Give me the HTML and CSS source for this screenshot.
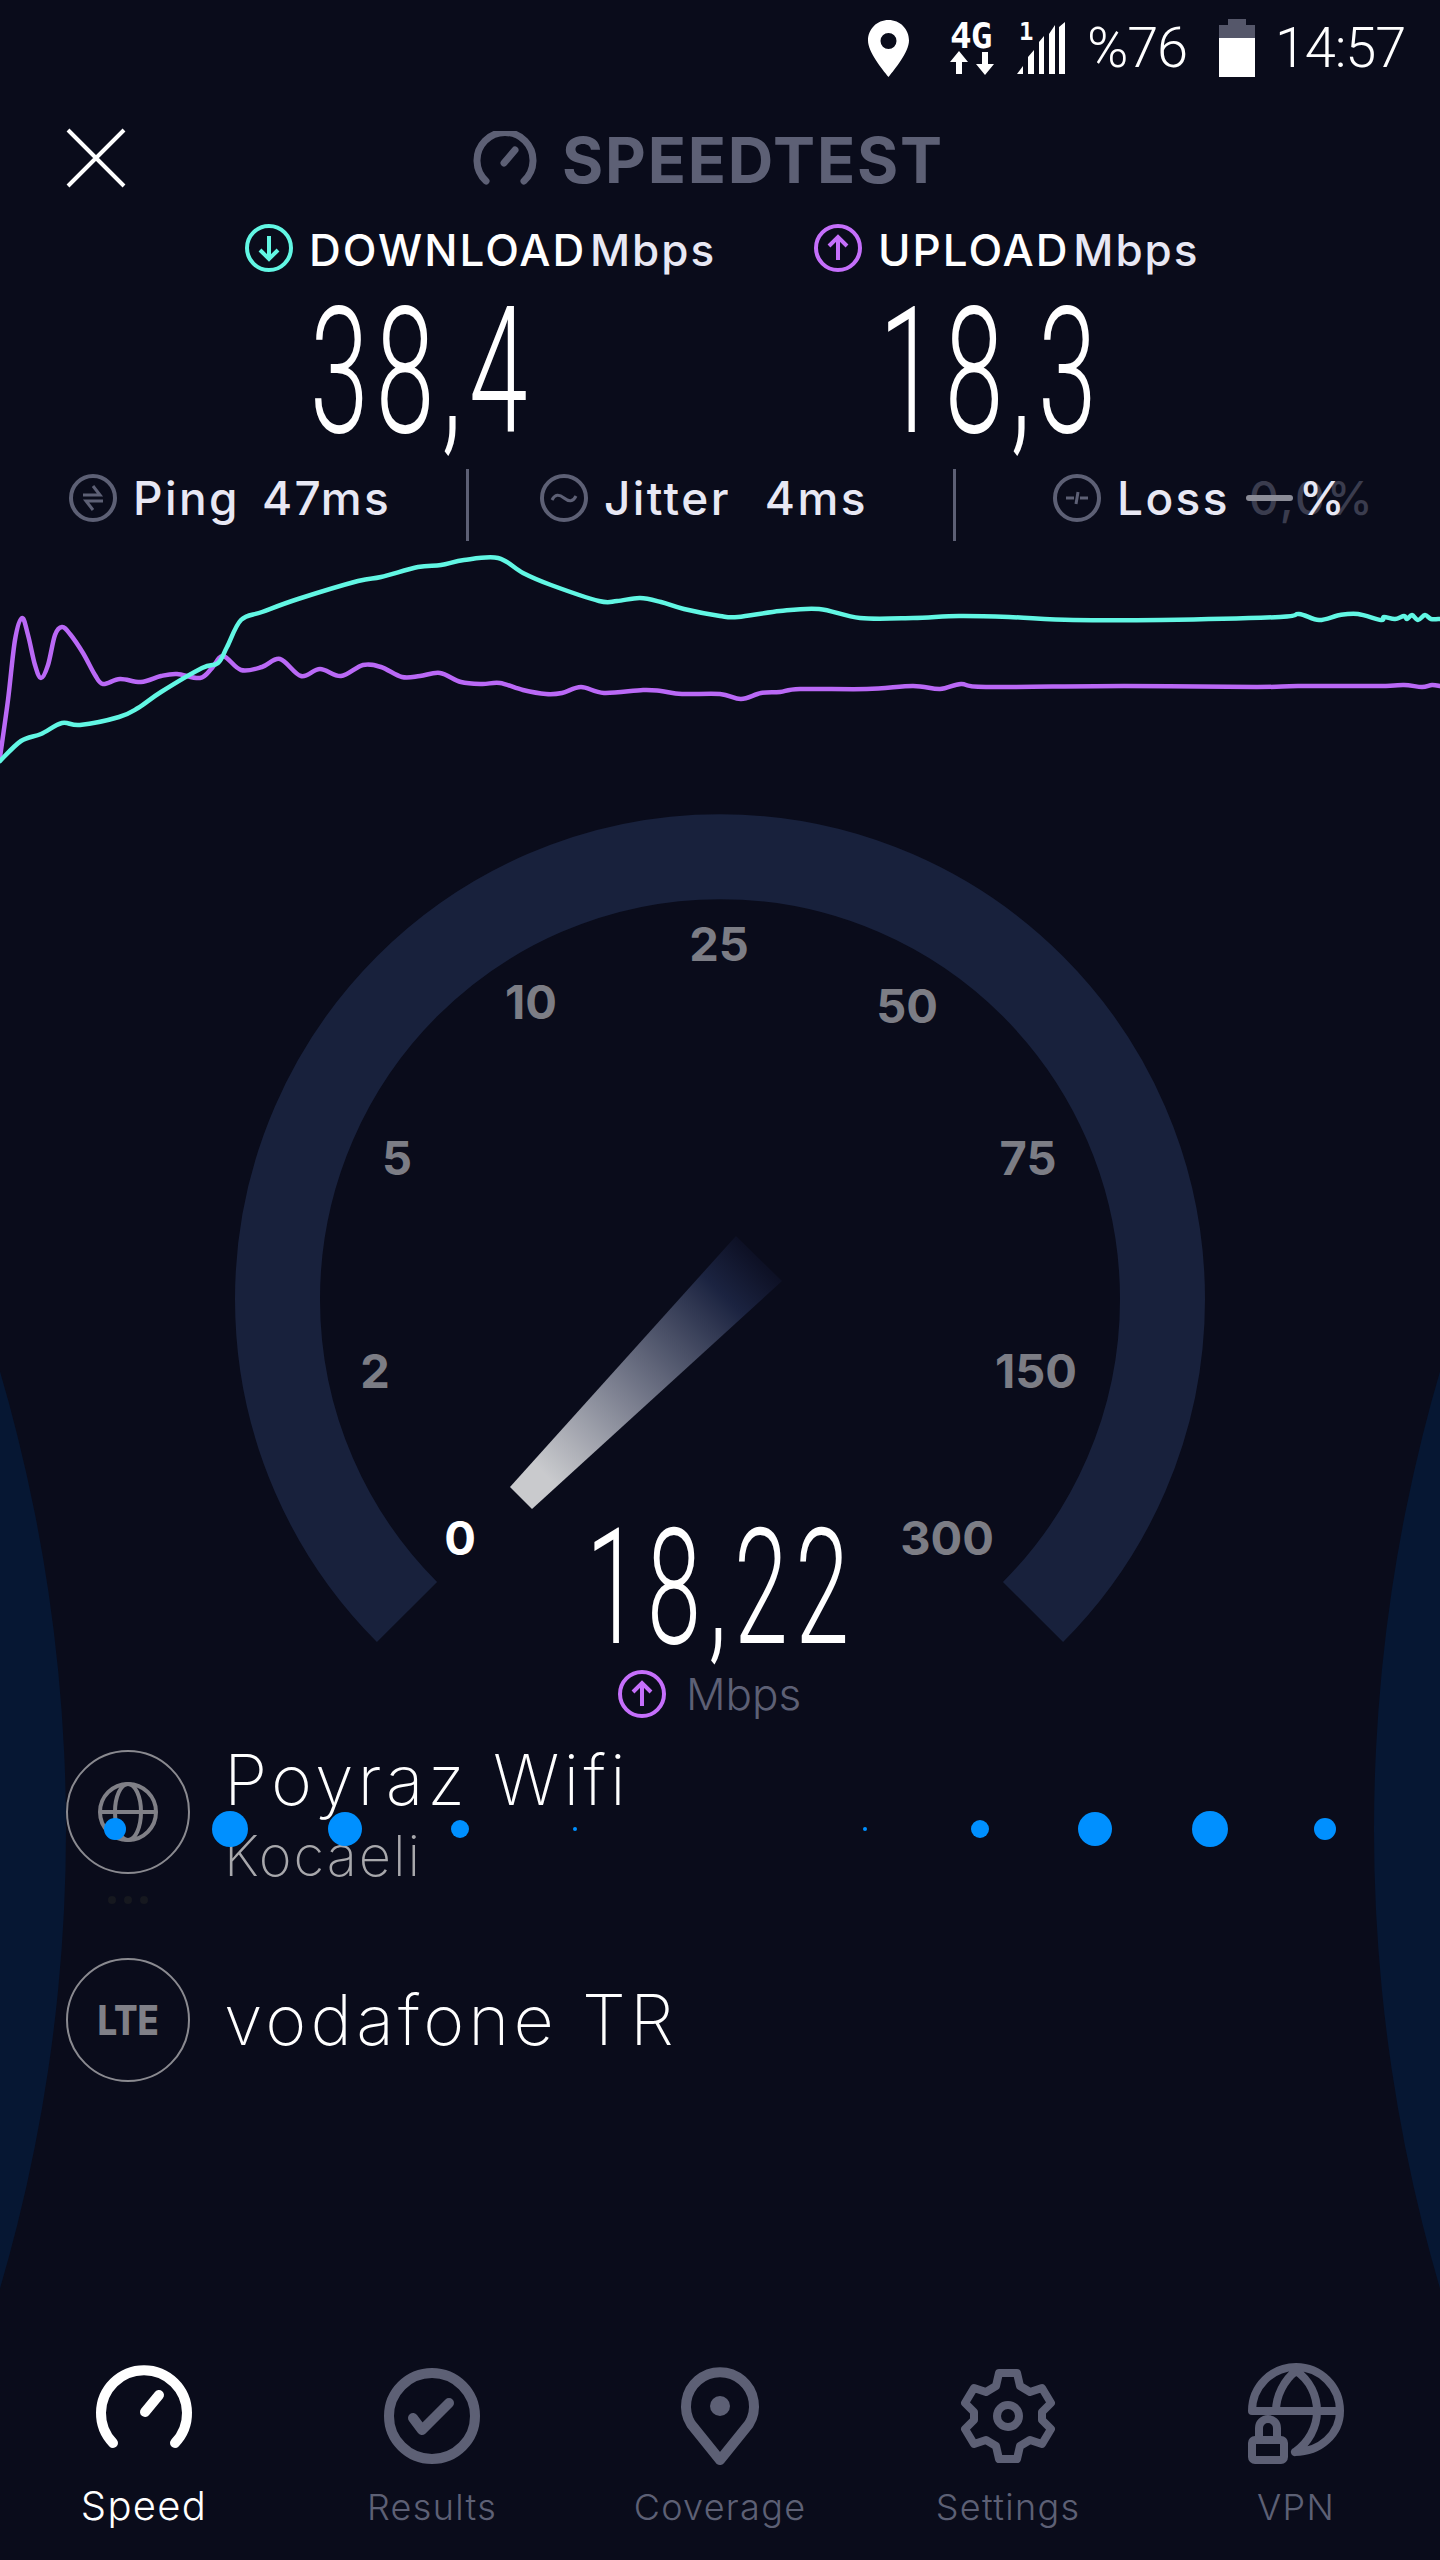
FILE: index.html
```html
<!DOCTYPE html>
<html>
<head>
  <title>Speedtest</title>
  <link rel="stylesheet" href="styles.css">
</head>
<body>
  <div class="backdrop">
    <div class="side side-left"></div>
    <div class="side side-right"></div>
  </div>

  <div class="status">
    <svg class="pin" viewBox="0 0 41 57"><path fill-rule="evenodd" d="M20.5 0C9 0 0 9 0 20.5 0 32 14 49 20.5 57 27 49 41 32 41 20.5 41 9 32 0 20.5 0zm0 13a8 8 0 1 1 0 16 8 8 0 0 1 0-16z"/></svg>
    <div class="net">
      <span class="net-label">4G</span>
      <svg class="net-arrows" viewBox="0 0 44 24"><path d="M9 0l9 11h-6v12H6V11H0zM35 24l-9-11h6V1h6v12h6z"/></svg>
    </div>
    <div class="signal">
      <span class="sim">1</span>
      <svg viewBox="0 0 48 52"><path d="M0 52l6-8v8zM11 52V35l6-7v24zM22 52V20l5-6v38zM32 52V12l6-9v49zM42 52V5l6-5v52z"/></svg>
    </div>
    <span class="percent">%76</span>
    <svg class="battery" viewBox="0 0 36 58"><path class="battery-empty" d="M9 0h18v6h9v13H0V6h9z"/><path d="M0 19h36v39H0z"/></svg>
    <span class="clock">14:57</span>
  </div>

  <div class="header">
    <svg class="close" viewBox="0 0 60 60"><path d="M2 2l56 56M58 2L2 58"/></svg>
    <svg class="logo" viewBox="0 0 64 54"><path d="M13 50A28 28 0 1 1 51 50M31 32l11-13"/></svg>
    <span class="brand">SPEEDTEST</span>
  </div>

  <div class="speeds">
    <div class="speed">
      <div class="speed-label">
        <svg class="round-icon cyan" viewBox="0 0 48 48"><circle cx="24" cy="24" r="22"/><path d="M24 12v23M15 26l9 9 9-9"/></svg>
        <span><b>DOWNLOAD</b> Mbps</span>
      </div>
      <div class="big-number">38,4</div>
    </div>
    <div class="speed">
      <div class="speed-label">
        <svg class="round-icon purple" viewBox="0 0 48 48"><circle cx="24" cy="24" r="22"/><path d="M24 36V13M15 22l9-9 9 9"/></svg>
        <span><b>UPLOAD</b> Mbps</span>
      </div>
      <div class="big-number">18,3</div>
    </div>
  </div>

  <div class="stats">
    <div class="stat stat-ping">
      <svg class="round-icon grey" viewBox="0 0 48 48"><circle cx="24" cy="24" r="22"/><path class="thin" d="M14 21h17l-7-9M34 27H17l7 9"/></svg>
      <span class="stat-name">Ping</span>
      <span class="stat-value">47ms</span>
    </div>
    <div class="stat stat-jitter">
      <svg class="round-icon grey" viewBox="0 0 48 48"><circle cx="24" cy="24" r="22"/><path class="thin" d="M12 26c3-6 7-6 12-2s9 4 12-2"/></svg>
      <span class="stat-name">Jitter</span>
      <span class="stat-value">4ms</span>
    </div>
    <div class="stat stat-loss">
      <svg class="round-icon grey" viewBox="0 0 48 48"><circle cx="24" cy="24" r="22"/><path class="thin" d="M13 24h8M27 24h8M25 18l-2 12"/></svg>
      <span class="stat-name">Loss</span>
      <span class="loss-value">0,0%<i class="loss-dash"></i><span class="loss-percent">%</span></span>
    </div>
  </div>

  <svg class="chart" viewBox="0 541 1440 259">
    <path id="line-upload" class="line line-upload"/>
    <path id="line-download" class="line line-download"/>
  </svg>

  <div class="gauge">
    <svg class="gauge-dial" viewBox="0 800 1440 860">
      <defs>
        <linearGradient id="needle" gradientUnits="userSpaceOnUse" x1="759" y1="1258" x2="521" y2="1498">
          <stop offset="0" stop-color="#0d1024"/>
          <stop offset="0.15" stop-color="#1b2340"/>
          <stop offset="0.55" stop-color="#777b8c"/>
          <stop offset="0.9" stop-color="#c9cacd"/>
        </linearGradient>
      </defs>
      <path class="dial-arc" d="M407 1612A442.5 442.5 0 1 1 1033 1612"/>
      <polygon fill="url(#needle)" points="736,1236 782,1281 532,1509 510,1487"/>
      <text class="tick" x="719" y="961">25</text>
      <text class="tick" x="531" y="1019">10</text>
      <text class="tick" x="907" y="1023">50</text>
      <text class="tick" x="397" y="1175">5</text>
      <text class="tick" x="1028" y="1175">75</text>
      <text class="tick" x="375" y="1388">2</text>
      <text class="tick" x="1036" y="1388">150</text>
      <text class="tick tick-on" x="460" y="1555">0</text>
      <text class="tick" x="947" y="1555">300</text>
    </svg>
    <div class="readout">
      <div class="readout-number">18,22</div>
      <div class="readout-unit">
        <svg class="round-icon purple" viewBox="0 0 48 48"><circle cx="24" cy="24" r="22"/><path d="M24 36V13M15 22l9-9 9 9"/></svg>
        <span>Mbps</span>
      </div>
    </div>
  </div>

  <div class="servers">
    <div class="server">
      <div class="server-badge">
        <svg class="globe" viewBox="0 0 60 60"><circle cx="30" cy="30" r="28"/><ellipse cx="30" cy="30" rx="13" ry="28"/><path d="M2 30h56"/></svg>
      </div>
      <div class="server-text">
        <div class="server-name">Poyraz Wifi</div>
        <div class="server-place">Kocaeli</div>
      </div>
      <div class="more"><i></i><i></i><i></i></div>
    </div>
    <div class="server">
      <div class="server-badge"><span class="lte">LTE</span></div>
      <div class="server-text">
        <div class="server-name">vodafone TR</div>
      </div>
    </div>

    <div class="dots">
      <div class="dot-group">
        <span class="dot"><i class="d22"></i></span>
        <span class="dot"><i class="d36"></i></span>
        <span class="dot"><i class="d34"></i></span>
        <span class="dot"><i class="d18"></i></span>
        <span class="dot"><i class="d4"></i></span>
      </div>
      <div class="dot-group">
        <span class="dot"><i class="d4"></i></span>
        <span class="dot"><i class="d18"></i></span>
        <span class="dot"><i class="d34"></i></span>
        <span class="dot"><i class="d36"></i></span>
        <span class="dot"><i class="d22"></i></span>
      </div>
    </div>
  </div>

  <div class="nav">
    <div class="nav-item active">
      <svg viewBox="0 4 96 96"><path d="M17 79A43 43 0 1 1 79 79"/><path d="M49 48l14-17"/></svg>
      <span>Speed</span>
    </div>
    <div class="nav-item">
      <svg viewBox="0 0 96 96"><circle cx="48" cy="48" r="43"/><path d="M29 50l9 12 27-27"/></svg>
      <span>Results</span>
    </div>
    <div class="nav-item">
      <svg viewBox="0 0 96 96"><path d="M48 92L19 56A34 34 0 1 1 77 56z"/><circle class="solid" cx="48" cy="38" r="10"/></svg>
      <span>Coverage</span>
    </div>
    <div class="nav-item">
      <svg class="gear" viewBox="0 0 96 96"><path d="M39 5h18l3 13 10 6 12-4 9 15-9 9v8l9 9-9 15-12-4-10 6-3 13H39l-3-13-10-6-12 4-9-15 9-9v-8l-9-9 9-15 12 4 10-6z"/><circle cx="48" cy="48" r="11"/></svg>
      <span>Settings</span>
    </div>
    <div class="nav-item">
      <svg class="gear" viewBox="0 0 96 96"><path d="M4 43A44 44 0 0 1 92 43C92 66 72 84 47 84M4 43h88M48 3C36 12 28 28 28 43M48 3C62 12 69 28 69 43C69 60 60 75 47 84"/><rect x="4" y="72" width="32" height="20" rx="3"/><path d="M11 72V60A9 9 0 0 1 29 60V72"/></svg>
      <span>VPN</span>
    </div>
  </div>

  <script src="chart.js"></script>
</body>
</html>
```

FILE: styles.css
```css
* {
  box-sizing: border-box;
}

body {
  position: relative;
  width: 1440px;
  height: 2560px;
  margin: 0;
  background-color: #0a0c1b;
  color: #fff;
  font-family: Inter, "Liberation Sans", sans-serif;
  display: flex;
  flex-direction: column;
}

.backdrop {
  position: absolute;
  top: 0;
  left: 0;
  width: 1440px;
  height: 2560px;
  overflow: hidden;
}

.side {
  position: absolute;
  top: 205px;
  width: 3250px;
  height: 3250px;
  border-radius: 50%;
  background-color: #061733;
}

.side-left {
  left: -3184px;
}

.side-right {
  right: -3184px;
}

/* status bar */

.status {
  position: relative;
  height: 96px;
  padding-right: 35px;
  display: flex;
  justify-content: flex-end;
  align-items: center;
  font-family: Roboto, sans-serif;
  font-weight: 300;
}

.status svg {
  display: block;
  fill: #fff;
}

.pin {
  width: 41px;
  height: 57px;
}

.net {
  width: 44px;
  margin-left: 41px;
}

.net-label {
  display: block;
  height: 30px;
  font-family: "DejaVu Sans Mono", monospace;
  font-size: 36px;
  font-weight: 700;
  line-height: 30px;
  letter-spacing: -1px;
}

.net-arrows {
  width: 44px;
  height: 24px;
}

.signal {
  position: relative;
  width: 48px;
  margin-left: 23px;
}

.signal svg {
  width: 48px;
  height: 52px;
}

.sim {
  position: absolute;
  top: -2px;
  left: 2px;
  font-family: "DejaVu Sans Mono", monospace;
  font-size: 24px;
  font-weight: 700;
  line-height: 24px;
}

.percent {
  margin-left: 22px;
  font-size: 56px;
  letter-spacing: -1.2px;
}

.battery {
  width: 36px;
  height: 58px;
  margin-left: 32px;
}

.battery .battery-empty {
  fill: #55576a;
}

.clock {
  margin-left: 20px;
  font-size: 56px;
  letter-spacing: -1.2px;
}

/* header */

.header {
  position: relative;
  height: 60px;
  margin-top: 32px;
  padding-left: 66px;
  display: flex;
  align-items: center;
}

.close {
  width: 60px;
  height: 60px;
  fill: none;
  stroke: #fff;
  stroke-width: 4;
}

.logo {
  width: 64px;
  height: 54px;
  margin-left: 347px;
  fill: none;
  stroke: #5d6075;
  stroke-width: 7;
  stroke-linecap: round;
}

.brand {
  margin-left: 25px;
  padding-top: 3px;
  font-size: 63px;
  font-weight: 700;
  color: #5d6075;
  letter-spacing: 1.8px;
}

/* results */

.speeds {
  position: relative;
  margin-top: 36px;
  padding-left: 245px;
  display: grid;
  grid-template-columns: 569px auto;
}

.speed-label {
  display: flex;
  align-items: center;
  gap: 16px;
  height: 48px;
  font-size: 44px;
  font-weight: 500;
  letter-spacing: 2px;
  word-spacing: -10px;
  color: #e8e8f4;
  line-height: 52px;
}

.speed-label span {
  padding-top: 3px;
}

.speed-label b {
  font-weight: 500;
  color: #fff;
}

.round-icon {
  width: 48px;
  height: 48px;
  flex: none;
  fill: none;
  stroke-width: 4;
}

.round-icon.cyan {
  stroke: #62f7e4;
}

.round-icon.purple {
  stroke: #c56ffb;
}

.round-icon.grey {
  stroke: #5d6075;
}

.round-icon .thin {
  stroke-width: 3;
}

.big-number {
  margin-left: 65px;
  margin-top: 10px;
  height: 160px;
  font-family: Roboto, sans-serif;
  font-size: 176px;
  font-weight: 300;
  line-height: 180px;
  letter-spacing: 12px;
  transform: scaleX(0.6);
  transform-origin: left top;
  white-space: nowrap;
}

.stats {
  position: relative;
  margin-top: 27px;
  padding-left: 69px;
  display: flex;
  height: 72px;
}

.stat {
  display: flex;
  align-items: center;
  padding-bottom: 14px;
  font-size: 46px;
  font-weight: 500;
  letter-spacing: 2.4px;
  color: #e8e8f4;
}

.stat-ping {
  width: 400px;
  border-right: 3px solid #5d6075;
}

.stat-jitter {
  width: 487px;
  padding-left: 71px;
  border-right: 3px solid #5d6075;
}

.stat-loss {
  padding-left: 97px;
}

.stat-name {
  margin-left: 16px;
}

.stat-value {
  margin-left: 22px;
}

.stat-jitter .stat-value {
  margin-left: 34px;
}

.loss-value {
  position: relative;
  margin-left: 19px;
  color: #3a3c4e;
}

.loss-dash {
  position: absolute;
  top: 25px;
  left: -3px;
  width: 47px;
  height: 6px;
  border-radius: 3px;
  background-color: #8b8c97;
}

.loss-percent {
  position: absolute;
  top: 0;
  left: 50px;
  color: #e8e8f4;
}

/* chart */

.chart {
  position: relative;
  display: block;
  width: 1440px;
  height: 259px;
  flex: none;
}

.line {
  fill: none;
  stroke-width: 4.5;
  stroke-linejoin: round;
  stroke-linecap: round;
}

.line-download {
  stroke: #62f7e4;
}

.line-upload {
  stroke: #ba69f6;
}

/* gauge */

.gauge {
  position: relative;
  height: 949px;
  flex: none;
}

.gauge-dial {
  display: block;
  width: 1440px;
  height: 860px;
}

.dial-arc {
  fill: none;
  stroke: #18213c;
  stroke-width: 85;
}

.tick {
  font-size: 47px;
  font-weight: 700;
  fill: #7c7d85;
  text-anchor: middle;
}

.tick-on {
  fill: #fff;
}

.readout {
  position: absolute;
  top: 703px;
  left: 0;
  right: 0;
}

.readout-number {
  margin-left: 586px;
  height: 164px;
  font-family: Roboto, sans-serif;
  font-size: 162px;
  font-weight: 300;
  line-height: 170px;
  letter-spacing: 12px;
  transform: scaleX(0.6);
  transform-origin: left top;
  white-space: nowrap;
}

.readout-unit {
  margin-left: 618px;
  display: flex;
  align-items: center;
  gap: 20px;
  font-size: 44px;
  font-weight: 300;
  color: #5d6075;
}

/* servers */

.servers {
  position: relative;
  padding-left: 66px;
  display: flex;
  flex-direction: column;
  gap: 83px;
}

.server {
  position: relative;
  display: flex;
  align-items: center;
  gap: 34px;
  height: 125px;
}

.server-badge {
  width: 124px;
  height: 124px;
  flex: none;
  border: 2px solid #8a8a90;
  border-radius: 50%;
  display: flex;
  justify-content: center;
  align-items: center;
}

.globe {
  width: 60px;
  height: 60px;
  fill: none;
  stroke: #808087;
  stroke-width: 4;
}

.lte {
  font-size: 41px;
  font-weight: 800;
  color: #808087;
  transform: scaleX(0.85);
}

.server-name {
  font-size: 70px;
  font-weight: 200;
  line-height: 80px;
  letter-spacing: 4.2px;
}

.server-place {
  margin-top: 8px;
  font-size: 56px;
  font-weight: 200;
  line-height: 56px;
  letter-spacing: 2px;
  color: #a8a8ac;
}

.more {
  position: absolute;
  top: 147px;
  left: 42px;
  display: flex;
  gap: 8px;
}

.more i {
  width: 8px;
  height: 8px;
  border-radius: 50%;
  background-color: #16181f;
}

.dots {
  position: absolute;
  top: 62px;
  left: 97px;
  right: 97px;
  display: flex;
  justify-content: space-between;
}

.dot-group {
  display: flex;
  gap: 79px;
}

.dot {
  width: 36px;
  height: 36px;
  display: flex;
  justify-content: center;
  align-items: center;
}

.dot i {
  display: block;
  border-radius: 50%;
  background-color: #0090ff;
}

.d36 { width: 36px; height: 36px; }
.d34 { width: 34px; height: 34px; }
.d22 { width: 22px; height: 22px; }
.d18 { width: 18px; height: 18px; }
.d4 { width: 4px; height: 4px; }

/* bottom nav */

.nav {
  position: relative;
  margin-top: auto;
  height: 192px;
  display: grid;
  grid-template-columns: repeat(5, 288px);
}

.nav-item {
  display: flex;
  flex-direction: column;
  align-items: center;
  font-size: 36px;
  font-weight: 300;
  letter-spacing: 1.3px;
  color: #5d6075;
}

.nav-item svg {
  width: 96px;
  height: 96px;
  margin-bottom: 21px;
  overflow: visible;
  fill: none;
  stroke: #5d6075;
  stroke-width: 10;
  stroke-linecap: round;
  stroke-linejoin: round;
}

.nav-item svg.gear {
  stroke-width: 8;
}

.nav-item svg .solid {
  fill: #5d6075;
  stroke: none;
}

.nav-item.active {
  font-size: 40px;
  color: #fff;
}

.nav-item.active svg {
  stroke: #fff;
  margin-bottom: 17px;
}
```

FILE: chart.js
```js
var uploadPoints = [
  [0,757],[8,700],[15,640],[22,618],[28,635],[35,665],[41,678],[48,665],[55,635],[62,627],[70,634],[83,653],[95,675],[103,684],
  [120,679],[141,682],[161,676],[177,674],[200,678],[212,668],[223,656],[241,670],[262,667],[280,659],[301,676],[320,669],
  [341,676],[363,665],[381,667],[402,677],[420,676],[440,673],[461,682],[482,684],[500,683],[523,690],[546,694],[562,693],
  [581,687],[604,693],[643,690],[661,691],[682,694],[720,694],[741,699],[761,693],[780,692],[800,689],[867,689],[913,686],
  [940,689],[961,684],[986,687],[1124,686],[1257,687],[1298,686],[1381,686],[1404,685],[1422,687],[1432,685],[1440,686]
];

var downloadPoints = [
  [0,761],[21,741],[41,734],[62,723],[80,725],[119,717],[138,708],[161,692],[202,668],[218,663],[227,647],[241,620],[262,612],
  [298,599],[358,581],[381,577],[418,567],[441,565],[464,560],[498,558],[523,573],[551,585],[599,601],[617,601],[640,598],
  [661,602],[684,609],[720,616],[738,617],[780,611],[819,609],[860,618],[913,618],[959,616],[1009,617],[1073,620],[1161,620],
  [1280,617],[1299,614],[1319,620],[1340,615],[1358,614],[1381,620],[1384,617],[1395,619],[1404,616],[1407,619],[1412,615],
  [1418,620],[1425,615],[1431,619],[1440,619]
];

// catmull-rom through the points, so the lines come out smooth
function smoothPath(points) {
  var d = "M" + points[0][0] + " " + points[0][1];
  for (var i = 0; i < points.length - 1; i++) {
    var p0 = points[i - 1] || points[i];
    var p1 = points[i];
    var p2 = points[i + 1];
    var p3 = points[i + 2] || p2;
    var c1x = p1[0] + (p2[0] - p0[0]) / 6;
    var c1y = p1[1] + (p2[1] - p0[1]) / 6;
    var c2x = p2[0] - (p3[0] - p1[0]) / 6;
    var c2y = p2[1] - (p3[1] - p1[1]) / 6;
    d += "C" + c1x + " " + c1y + " " + c2x + " " + c2y + " " + p2[0] + " " + p2[1];
  }
  return d;
}

document.getElementById("line-upload").setAttribute("d", smoothPath(uploadPoints));
document.getElementById("line-download").setAttribute("d", smoothPath(downloadPoints));
```
